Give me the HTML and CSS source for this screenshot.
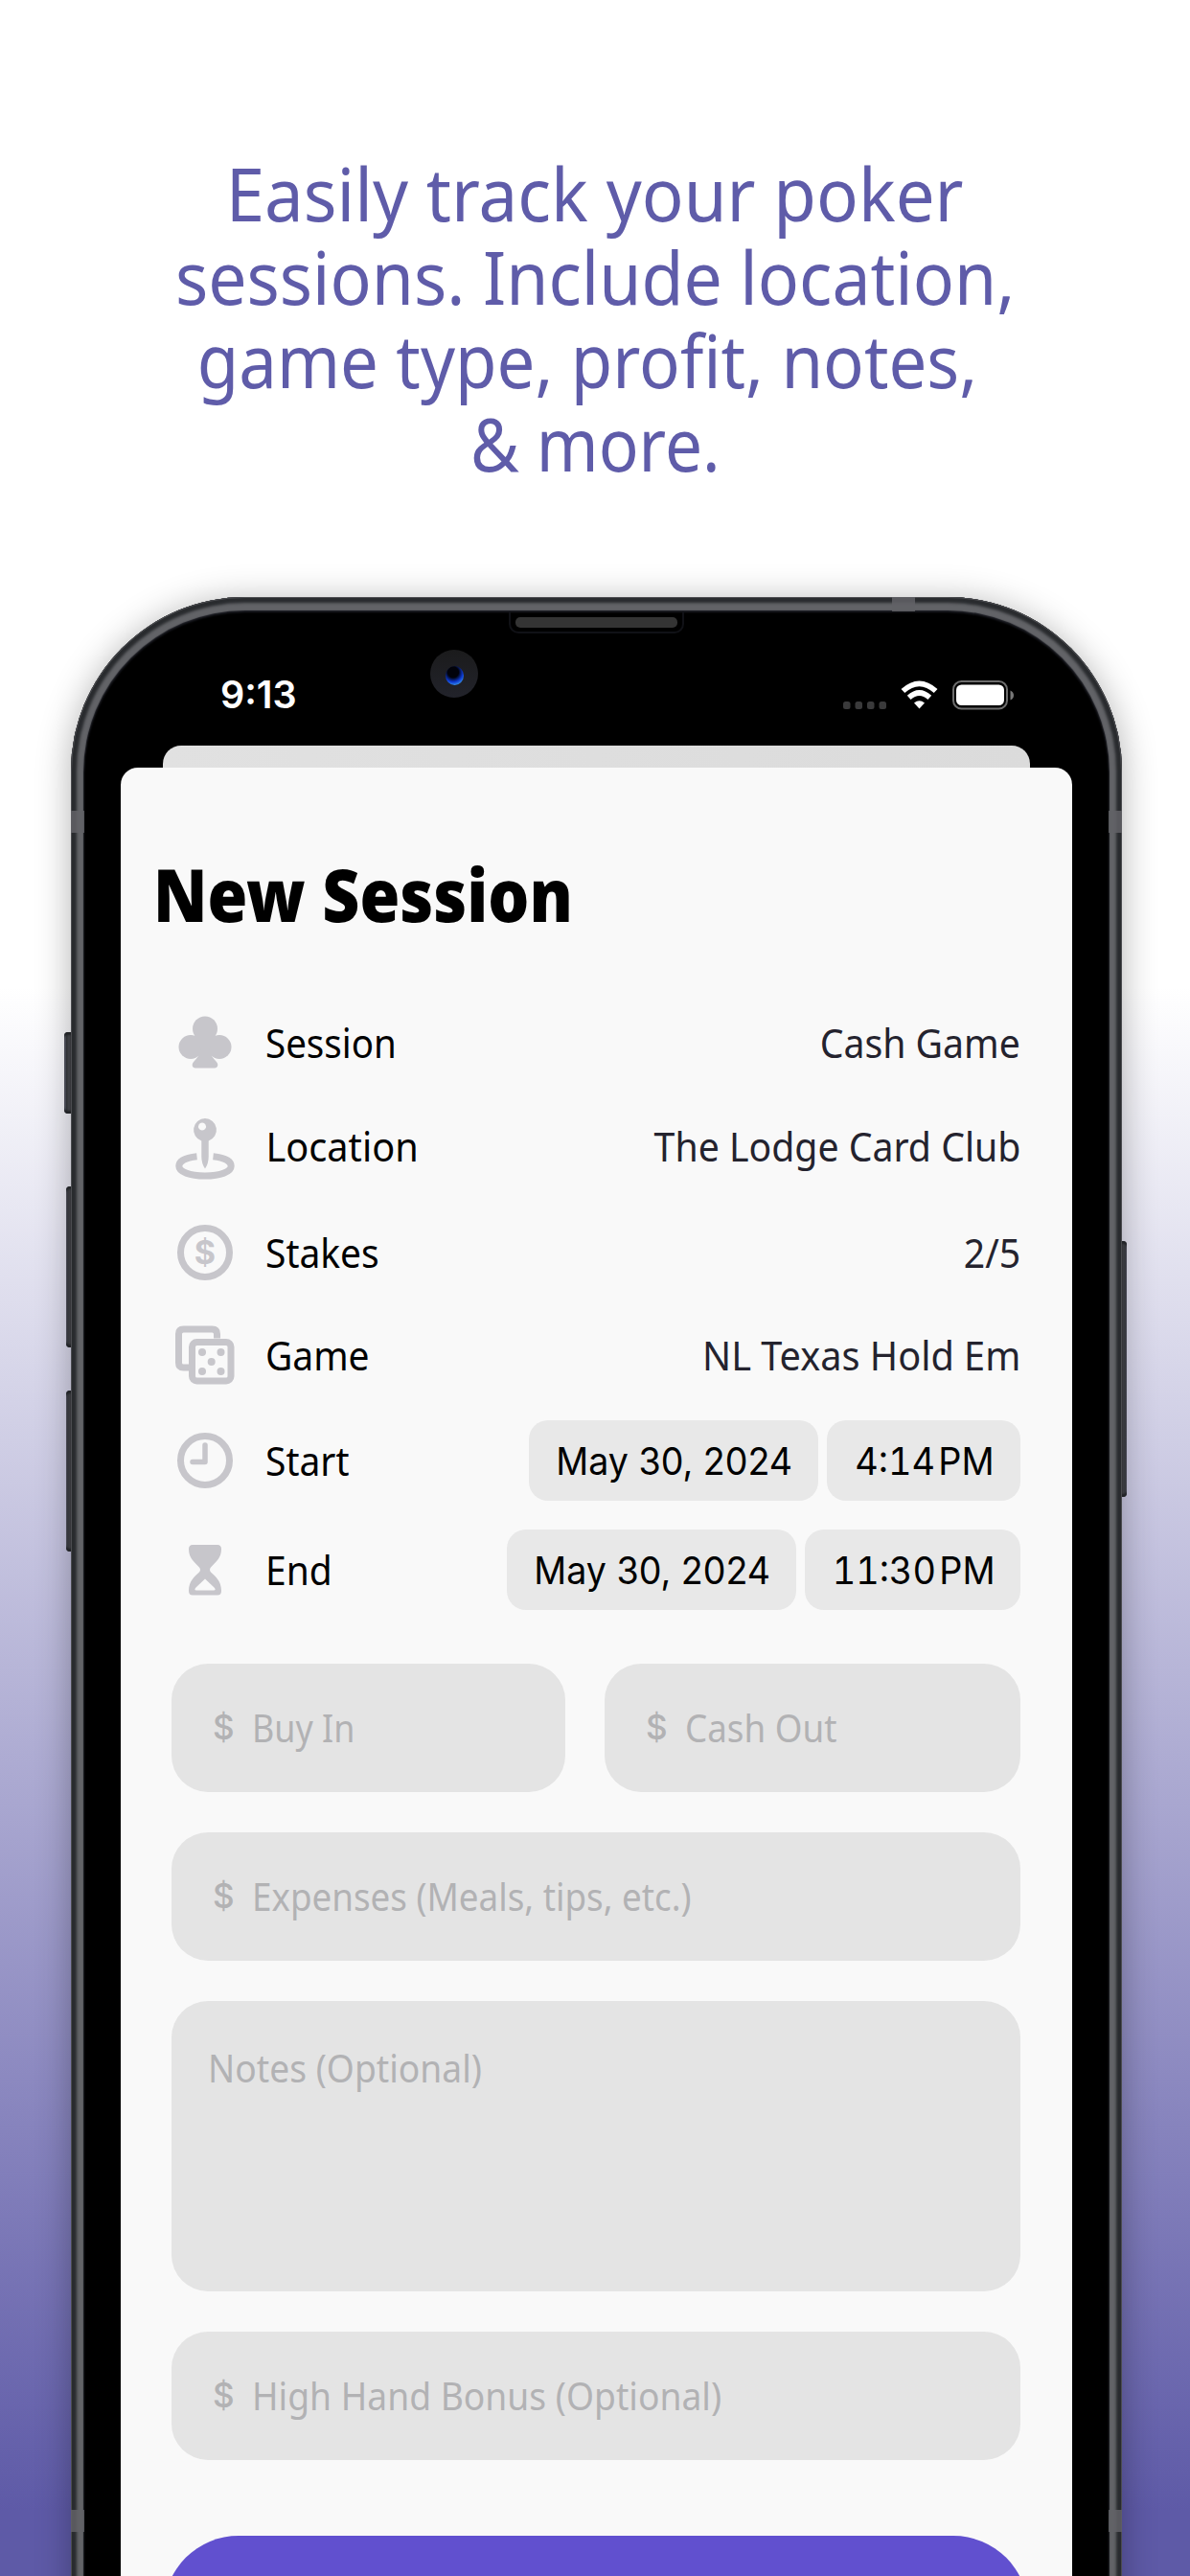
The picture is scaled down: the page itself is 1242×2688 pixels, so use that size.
FILE: index.html
```html
<!DOCTYPE html>
<html lang="en"><head><meta charset="utf-8"><title>New Session</title><link rel="stylesheet" href="styles.css"></head>
<body>
<main class="page">
<h1 class="headline"><span class="line first">Easily track your poker</span><span class="line second">sessions. Include location,</span><span class="line third">game type, profit, notes,</span><span class="line fourth">&amp; more.</span></h1>
<section class="phone">
<i class="key mute"></i><i class="key up"></i><i class="key down"></i><i class="key power"></i>
<i class="band top"></i><i class="band left"></i><i class="band right"></i><i class="band left low"></i><i class="band right low"></i>
<i class="speaker"></i><i class="camera"></i>
<header class="status"><span class="time">9:13</span>
<svg class="signals" width="182" height="36" viewBox="0 0 182 36"><g fill="#3a3a3b"><rect x="1" y="25" width="7.5" height="8" rx="2.5"/><rect x="13.5" y="25" width="7.5" height="8" rx="2.5"/><rect x="26" y="25" width="7.5" height="8" rx="2.5"/><rect x="38.5" y="25" width="7.5" height="8" rx="2.5"/></g>
<g fill="none" stroke="#fff" stroke-width="5.6"><path d="M63.4 14Q80.5-1.4 97.6 14"/><path d="M69.7 20.8Q80.5 11.2 91.3 20.8"/></g><path d="M75 26.5Q80.5 22 86 26.5L80.5 32.5Z" fill="#fff"/>
<rect x="116" y="4" width="56" height="28.5" rx="8.5" fill="none" stroke="#6d6d6d" stroke-width="2"/><rect x="119" y="7.5" width="50" height="21.5" rx="5.5" fill="#fff"/><path d="M175.5 13.5q3.5 1.500 3.500 5t-3.500 5z" fill="#777"/></svg></header>
<div class="behind"></div>
<div class="sheet">
<h2 class="title"><span>New Session</span></h2>
<ul class="rows">
<li class="row"><svg class="icon" viewBox="0 0 64 64"><circle cx="32" cy="17.5" r="13"/><circle cx="17" cy="36.5" r="12.5"/><circle cx="47" cy="36.5" r="12.5"/><path d="M24 26h16v10h-2.500l-1 2.500c1 6 4 10 7 13 3 3 2 7-1.500 7h-20c-3.500 0-4.500-4-1.500-7 3-3 6-7 7-13l-1-2.500H24z"/></svg><span class="label tight">Session</span><span class="value">Cash Game</span></li>
<li class="row"><svg class="icon pin" viewBox="0 0 64 64"><path fill-rule="evenodd" d="M32 0a12 12 0 0 1 3.7 23.4V40q0 7-3.700 12.500Q28.300 47 28.300 40V23.400A12 12 0 0 1 32 0zM29 4.500a4 4 0 1 0 .01 0z"/><path class="stroke" stroke-width="7" d="M23.500 39.700C11 41 4.800 45 4.800 49.800c0 6 11 10.200 27.200 10.200S59.200 55.800 59.200 49.800c0-4.800-6.200-8.800-18.700-10.100"/></svg><span class="label loose">Location</span><span class="value">The Lodge Card Club</span></li>
<li class="row"><svg class="icon" viewBox="0 0 64 64"><circle class="stroke" cx="32" cy="32" r="25.5" stroke-width="7"/><text x="32" y="44" text-anchor="middle" class="coin">$</text></svg><span class="label">Stakes</span><span class="value">2/5</span></li>
<li class="row"><svg class="icon" viewBox="0 0 64 64"><path class="stroke" stroke-width="7" d="M44.500 14.500V10Q44.500 5 39.500 5H9.500Q4.500 5 4.500 10V40Q4.500 45 9.500 45H16"/><rect class="stroke" stroke-width="7" x="18.5" y="18.5" width="40.5" height="40.5" rx="5"/><circle cx="29" cy="29" r="4"/><circle cx="48.5" cy="29" r="4"/><circle cx="38.7" cy="39" r="4"/><circle cx="29" cy="49" r="4"/><circle cx="48.5" cy="49" r="4"/></svg><span class="label">Game</span><span class="value loose">NL Texas Hold Em</span></li>
<li class="row"><svg class="icon" viewBox="0 0 64 64"><circle class="stroke" cx="32" cy="32" r="25.5" stroke-width="7"/><path class="stroke" stroke-width="5.5" stroke-linecap="round" stroke-linejoin="round" d="M32 16V33.500H19"/></svg><span class="label">Start</span><span class="pill date"><b>May 30, 2024</b></span><span class="pill"><b class="clock">4:14 PM</b></span></li>
<li class="row"><svg class="icon" viewBox="0 0 64 64"><path fill-rule="evenodd" d="M19 6h26q4 0 4 4.500C49 20 43 24 38 29.500q-2 2.500 0 5C43 39 49 44 49 54q0 4.500-4 4.500H19q-4 0-4-4.500C15 44 21 39 26 34.500q2-2.500 0-5C21 24 15 20 15 10.500Q15 6 19 6zM32 41.500L22.500 50.500Q20 53.500 23 53.500H41Q44 53.500 41.500 50.500z"/></svg><span class="label">End</span><span class="pill date"><b>May 30, 2024</b></span><span class="pill long"><b class="clock">11:30 PM</b></span></li>
</ul>
<div class="fields">
<div class="pair"><div class="field"><span class="sign">$</span><span class="hint short">Buy In</span></div><div class="field"><span class="sign">$</span><span class="hint">Cash Out</span></div></div>
<div class="field"><span class="sign">$</span><span class="hint">Expenses (Meals, tips, etc.)</span></div>
<div class="field notes"><span class="hint wide">Notes (Optional)</span></div>
<div class="field"><span class="sign">$</span><span class="hint wide">High Hand Bonus (Optional)</span></div>
</div>
<div class="save"></div>
</div>
</section>
</main>
</body></html>
```
FILE: styles.css
```css
*{box-sizing:border-box}
body{margin:0;background:#fff;font-family:"Noto Sans",sans-serif}
.page{width:1242px;height:2688px;overflow:hidden;padding-top:158px;background:linear-gradient(#fff 1030px,#5e5aa7 2620px)}

.headline{margin:0;font-size:76px;line-height:87px;font-weight:400;color:#5f5ca9;text-align:center;height:465px}
.line{display:block;width:max-content;margin:0 auto}
.first{transform:translateX(-.5px) scaleX(.955)}
.second{transform:translateX(.5px) scaleX(.941)}
.third{transform:translateX(-8.5px) scaleX(.931)}
.fourth{transform:translateX(.5px) scaleX(.913)}

.phone{position:relative;width:1097px;height:2300px;margin-left:74px;padding:80px 52px 0;border-radius:182px 182px 0 0;background:#000;box-shadow:inset 0 0 0 1px #4b4c50,inset 0 0 3px 6px #292b2e,inset 0 1px 1px 13px #626367,inset 0 2px 2px 14px #191a20,0 4px 36px rgba(0,0,0,.3)}
.key,.band,.speaker,.camera{position:absolute;display:block}
.key{width:5px;left:-5px;border-radius:4px 0 0 4px;background:linear-gradient(90deg,#77798a,#303236 35%,#4b4c50);box-shadow:inset 0 3px 2px #222427,inset 0 -3px 2px #222427}
.mute{left:-7px;width:7px;top:454px;height:85px}
.up{top:615px;height:168px}
.down{top:828px;height:168px}
.power{left:auto;right:-5px;top:672px;height:267px;transform:scaleX(-1)}
.band{width:14px;height:23px;background:#616266;opacity:.85}
.band.left{left:0;top:223px}
.band.right{right:0;top:223px}
.band.low{top:1996px}
.band.top{left:857px;top:0;width:24px;height:15px}
.speaker{left:457px;top:16px;width:183px;height:22px;border:2px solid #101116;border-top:0;border-radius:0 0 10px 10px}
.speaker::after{content:"";display:block;margin:5px 5px;height:11px;border-radius:5px;background:#343434}
.camera{left:375px;top:55px;width:50px;height:50px;border-radius:50%;background:linear-gradient(#1b1b1c,#22232b)}
.camera::after{content:"";position:absolute;left:15.5px;top:17px;width:19px;height:20px;border-radius:50%;background:radial-gradient(circle at 42% 32%,#01020a 32%,#0c38d0 58%,#3a96e8 80%)}

.status{display:flex;justify-content:space-between;align-items:center;height:44px;padding:0 58px 0 104px;color:#fff}
.time{font:600 39.5px/44px Inter,sans-serif}
.signals{display:block}
.behind{width:905px;height:23px;margin:31px auto 0;border-radius:19px 19px 0 0;background:linear-gradient(90deg,#e1e1e1,#dbdbdb)}
.sheet{height:2000px;padding:77px 54px 0 53px;background:#f9f9f9;border-radius:18px 18px 0 0}
.title{margin:0 0 46px -19px;height:110px;font-size:77px;line-height:110px;font-weight:900;color:#000}
.title span{display:inline-block;transform:scaleX(.88);transform-origin:0 0}

.rows{display:grid;grid-template-rows:108px 108px 114px 100px 120px 108px;margin:0;padding:0;list-style:none}
.row{display:flex;align-items:center;font-size:41px;line-height:56px;color:#000}
.icon{width:64px;height:64px;margin:0 31px 0 3px;fill:#c7c6cb}
.pin{transform:translateY(3px)}
.stroke{fill:none;stroke:#c7c6cb}
.coin{font:700 34px Inter,sans-serif}
.label{flex:none;margin-right:auto;transform:scaleX(.95);transform-origin:0 0}
.label.tight{transform:scaleX(.939)}
.label.loose{transform:translateX(.5px) scaleX(.968)}
.value{flex:none;color:#24232e;transform:scaleX(.956);transform-origin:100% 0}
.value.loose{transform:scaleX(.968)}
.pill{flex:none;display:flex;justify-content:center;width:202px;height:84px;margin-left:9px;padding-top:1px;border-radius:20px;background:#e8e8e8;font:400 39px/84px Inter,sans-serif}
.pill b{font-weight:400;white-space:nowrap;transform:translateX(.6px) scaleX(.964)}
.pill .clock{font-variant-numeric:tabular-nums;word-spacing:-7px;transform:translateX(1px) scaleX(.97)}
.pill.date{width:302px}
.pill.long{width:225px}

.fields{display:grid;gap:42px;margin-top:44px}
.pair{display:grid;grid-template-columns:411px 434px;gap:41px}
.field{display:flex;height:134px;padding-left:43px;border-radius:38px;background:#e4e4e4;color:#b2b2b4;font-size:40px;line-height:133px;white-space:nowrap}
.sign{width:41px;font-family:Inter,sans-serif;font-size:35px;font-weight:500}
.hint{transform:scaleX(.919);transform-origin:0 0}
.hint.short{transform:scaleX(.896)}
.hint.wide{transform:scaleX(.93)}
.notes{height:303px;padding-left:38px;line-height:139px}
.save{height:240px;margin:79px -8px 0;border-radius:78px;background:#6150cf}
```
